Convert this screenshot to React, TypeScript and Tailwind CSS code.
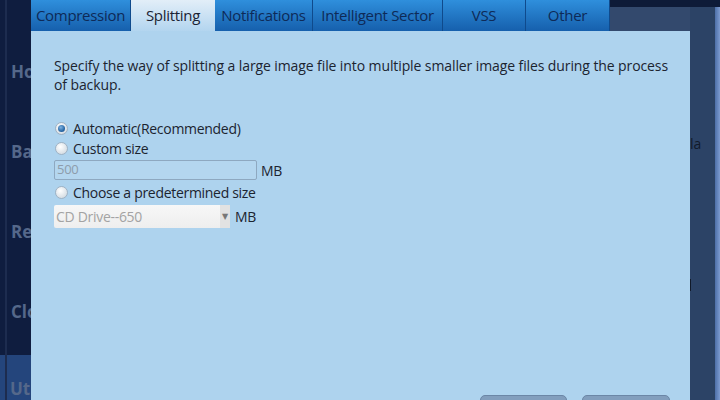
import React from "react";

const tabs = ["Compression", "Splitting", "Notifications", "Intelligent Sector", "VSS", "Other"];
const tabW = [100, 84, 98, 130, 83, 84];

function Radio({ checked }: { checked?: boolean }) {
  return (
    <span className="relative inline-flex h-[13px] w-[13px] shrink-0 items-center justify-center rounded-full border border-[#9fb2c4] bg-[radial-gradient(circle_at_40%_35%,#ffffff,#d9e0e6_70%,#b9c4cf)]">
      {checked && (
        <span className="h-[7px] w-[7px] rounded-full bg-[radial-gradient(circle_at_40%_35%,#7fb2e0,#2a6aa8_60%,#1a4a80)]" />
      )}
    </span>
  );
}

export default function App() {
  const font = { fontFamily: '"Open Sans", "DejaVu Sans", sans-serif' };
  return (
    <div className="flex h-[400px] w-[720px] overflow-hidden bg-[#0f1d3f]" style={font}>
      {/* left sidebar */}
      <div className="relative flex w-[31px] shrink-0 flex-col bg-[#0f1d3f]">
        <div className="absolute left-[5px] top-0 h-full w-[2px] bg-[#1d2c4f]" />
        <div className="flex h-[355px] flex-col pl-[11px] pt-[61px] text-[17px] font-bold leading-[22px] text-[#55688a]">
          <span className="h-[80px] whitespace-nowrap">Ho</span>
          <span className="h-[80px] whitespace-nowrap">Ba</span>
          <span className="h-[80px] whitespace-nowrap">Re</span>
          <span className="whitespace-nowrap">Clo</span>
        </div>
        <div className="flex flex-1 items-end bg-[#24457c] pb-[1px] pl-[10px] text-[17px] font-bold leading-[20px] text-[#55688a]">
          <span className="whitespace-nowrap">Ut</span>
        </div>
      </div>

      {/* dialog */}
      <div className="flex w-[659px] shrink-0 flex-col">
        <div className="flex h-[31px] bg-[#33496d] tracking-[-0.3px]">
          {tabs.map((t, i) =>
            i === 1 ? (
              <div
                key={t}
                style={{ width: tabW[i] }}
                className="flex items-center justify-center bg-gradient-to-b from-[#e2eef8] to-[#b3d5ef] pb-[1px] text-[15px] text-[#1b2333]"
              >
                {t}
              </div>
            ) : (
              <div
                key={t}
                style={{ width: tabW[i] }}
                className="flex items-center justify-center border-r border-[#0f4a8c] bg-gradient-to-b from-[#2f8fdc] to-[#1660ad] pb-[1px] text-[15px] text-[#0e2a57]"
              >
                {t}
              </div>
            )
          )}
          <div className="flex-1 flex-col">
            <div className="h-[7px] bg-[#0e1b38]" />
          </div>
        </div>
        <div className="relative flex flex-1 flex-col bg-[#aed3ee] pl-[23px] pt-[25px] text-[14px] tracking-[-0.3px] text-[#1c2430]">
          <p className="w-[625px] leading-[19px] tracking-[-0.1px]">
            Specify the way of splitting a large image file into multiple smaller image files during the process of backup.
          </p>
          <div className="mt-[24px] flex flex-col">
            <label className="flex h-[20px] items-center gap-[5px] pl-[1px]">
              <Radio checked />
              <span>Automatic(Recommended)</span>
            </label>
            <label className="flex h-[20px] items-center gap-[5px] pl-[1px]">
              <Radio />
              <span>Custom size</span>
            </label>
            <div className="mt-[1px] flex h-[22px] items-center gap-[4px]">
              <div className="flex h-[20px] w-[203px] items-center rounded-[2px] border border-[#8ea8c0] bg-[#b4d6ef] pl-[2px] text-[13px] text-[#8d9cab]">
                500
              </div>
              <span>MB</span>
            </div>
            <label className="mt-[1px] flex h-[21px] items-center gap-[5px] pl-[1px]">
              <Radio />
              <span>Choose a predetermined size</span>
            </label>
            <div className="mt-[1px] flex h-[24px] items-center gap-[5px]">
              <div className="flex h-[23px] w-[176px] items-center justify-between rounded-[2px] bg-gradient-to-b from-[#f7f7f7] to-[#eeeeee] pl-[2px] text-[14px] text-[#a3a3a3]">
                <span>CD Drive--650</span>
                <span className="flex h-full w-[10px] items-center justify-center bg-[#e2e2e2] text-[8px] text-[#777]">▼</span>
              </div>
              <span>MB</span>
            </div>
          </div>
          <div className="absolute bottom-[-6px] left-[449px] h-[11px] w-[87px] rounded-t-[5px] border border-[#6b86a6] bg-[#829ebd]" />
          <div className="absolute bottom-[-6px] left-[551px] h-[11px] w-[88px] rounded-t-[5px] border border-[#6b86a6] bg-[#829ebd]" />
        </div>
      </div>

      {/* right */}
      <div className="flex w-[30px] shrink-0 flex-col">
        <div className="h-[7px] bg-[#0e1b38]" />
        <div className="flex flex-1">
          <div className="relative w-[25px] bg-[#2c4366]">
            <span className="absolute left-[0px] top-[126px] text-[14px] text-[#111a2a]">la</span>
            <span className="absolute left-[0px] top-[272px] h-[12px] w-[1px] bg-[#111a2a]" />
          </div>
          <div className="w-[5px] bg-gradient-to-r from-[#4d6fa8] to-[#7d9bd0]" />
        </div>
      </div>
    </div>
  );
}
